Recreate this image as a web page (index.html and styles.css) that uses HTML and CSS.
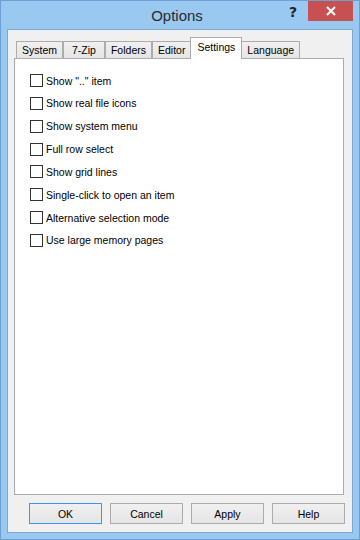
FILE: index.html
```html
<!DOCTYPE html>
<html lang="en">
<head>
    <meta charset="UTF-8">
    <meta name="viewport" content="width=device-width, initial-scale=1.0">
    <title>Options</title>
    <link rel="stylesheet" href="styles.css">
</head>
<body>
    <div class="window">
        <div class="titlebar">
            <div></div>
            <div class="title">Options</div>
            <div class="caption-btns">
                <span class="help-btn">?</span>
                <span class="close-btn">
                    <svg width="10" height="10" viewBox="0 0 10 10"><path d="M1 1 L9 9 M9 1 L1 9" stroke="#fff" stroke-width="2"/></svg>
                </span>
            </div>
        </div>
        <div class="client">
            <div class="tabs">
                <div class="tab">System</div>
                <div class="tab wide">7-Zip</div>
                <div class="tab">Folders</div>
                <div class="tab">Editor</div>
                <div class="tab selected">Settings</div>
                <div class="tab">Language</div>
            </div>
            <div class="panel">
                <label class="check"><span class="box"></span>Show ".." item</label>
                <label class="check"><span class="box"></span>Show real file icons</label>
                <label class="check"><span class="box"></span>Show system menu</label>
                <label class="check"><span class="box"></span>Full row select</label>
                <label class="check"><span class="box"></span>Show grid lines</label>
                <label class="check"><span class="box"></span>Single-click to open an item</label>
                <label class="check"><span class="box"></span>Alternative selection mode</label>
                <label class="check"><span class="box"></span>Use large memory pages</label>
            </div>
            <div class="buttons">
                <button class="btn default">OK</button>
                <button class="btn">Cancel</button>
                <button class="btn">Apply</button>
                <button class="btn">Help</button>
            </div>
        </div>
    </div>
</body>
</html>
```

FILE: styles.css
```css
body {
    margin: 0;
    font-family: "Liberation Sans", Arial, sans-serif;
    font-size: 10.5px;
    color: #000;
}
.window {
    width: 360px;
    height: 540px;
    box-sizing: border-box;
    background-color: #99c9f1;
    border: 1px solid #6e9fd1;
    display: flex;
    flex-direction: column;
}
.titlebar {
    height: 28px;
    display: grid;
    grid-template-columns: 1fr auto 1fr;
    padding-right: 6px;
}
.title {
    font-size: 15px;
    color: #2b2b2b;
    line-height: 28px;
    padding-top: 1px;
}
.caption-btns {
    display: flex;
    justify-content: flex-end;
    align-items: flex-start;
}
.help-btn {
    font-family: "DejaVu Sans", sans-serif;
    font-weight: bold;
    font-size: 14px;
    color: #222;
    line-height: 20px;
    margin-right: 11px;
    margin-top: 1px;
}
.close-btn {
    width: 45px;
    height: 20px;
    background-color: #c75050;
    display: flex;
    align-items: center;
    justify-content: center;
}
.client {
    flex: 1;
    margin: 0 6px 6px 6px;
    border: 1px solid #7ca8d6;
    background-color: #f0f0f0;
    padding: 8px 8px 8px 6px;
    display: flex;
    flex-direction: column;
}
.tabs {
    display: flex;
    align-items: flex-end;
    padding-left: 2px;
    height: 20px;
    position: relative;
    z-index: 1;
}
.tab {
    height: 16px;
    line-height: 17px;
    padding: 0 5px;
    border: 1px solid #acacac;
    border-bottom: none;
    background: linear-gradient(#f0f0f0, #e5e5e5);
}
.tab.wide {
    padding: 0 8px;
}
.tab.selected {
    height: 21px;
    line-height: 18px;
    margin: 0 -1px -1px -1px;
    padding: 0 6px;
    background: #fff;
    position: relative;
    z-index: 2;
}
.panel {
    flex: 1;
    background-color: #fff;
    border: 1px solid #acacac;
    padding: 15px 15px;
    display: flex;
    flex-direction: column;
    gap: 9.85px;
}
.check {
    display: flex;
    align-items: center;
    height: 13px;
}
.box {
    width: 11px;
    height: 11px;
    border: 1px solid #333;
    background-color: #fff;
    margin-right: 3px;
}
.buttons {
    display: flex;
    justify-content: flex-end;
    gap: 8px;
    margin-top: 8px;
    margin-right: -1px;
}
.btn {
    width: 73px;
    height: 21px;
    border: 1px solid #acacac;
    background: linear-gradient(#f0f0f0, #e5e5e5);
    font-family: "Liberation Sans", Arial, sans-serif;
    font-size: 10.5px;
    color: #000;
    padding: 0;
}
.btn.default {
    border-color: #3399ff;
}
```
